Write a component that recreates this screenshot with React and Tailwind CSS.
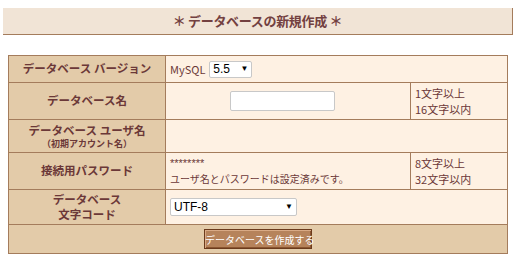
import React from 'react';

const font = { fontFamily: '"Noto Sans CJK JP", "Noto Sans", sans-serif' };
const sans = { fontFamily: '"Liberation Sans", sans-serif' };

export default function App() {
    return (
        <div className="w-[520px] h-[261px] bg-white text-[#6b3838]" style={font}>
            <div className="pt-2 pl-[3px]">
                <div className="w-[510px] h-[27px] bg-[#f1e4d6] border-b border-r border-[#a47c5c] flex items-center justify-center">
                    <h1 className="text-[13px] font-bold text-[#734040] tracking-tight">＊ データベースの新規作成 ＊</h1>
                </div>
            </div>

            {/* Form table */}
            <div className="pt-5 pl-2">
                <table className="w-[500px] border-collapse border border-[#a47c5c] text-[11px] table-fixed">
                    <colgroup>
                        <col className="w-[157px]" />
                        <col className="w-[245px]" />
                        <col />
                    </colgroup>
                    <tbody>
                        <tr className="h-[27px]">
                            <th className="bg-[#e3cba9] border border-[#a47c5c] text-[11.5px] font-bold">データベース バージョン</th>
                            <td colSpan="2" className="bg-[#fef1e3] border border-[#a47c5c] px-1">
                                <div className="flex items-center gap-1">
                                    <span>MySQL</span>
                                    <div className="w-[43px] h-[17px] bg-white border border-[#c8c8c8] rounded-[2px] flex items-center justify-between px-[3px] text-black text-[12px]" style={sans}>
                                        <span>5.5</span>
                                        <span className="text-[8px]">▼</span>
                                    </div>
                                </div>
                            </td>
                        </tr>
                        <tr className="h-[37px]">
                            <th className="bg-[#e3cba9] border border-[#a47c5c] text-[11.5px] font-bold">データベース名</th>
                            <td className="bg-[#fef1e3] border border-[#a47c5c]">
                                <div className="pl-[64px]">
                                    <div className="w-[105px] h-[20px] bg-white border border-[#c8c8c8] rounded-[2px]"></div>
                                </div>
                            </td>
                            <td className="bg-[#fef1e3] border border-[#a47c5c] px-1 leading-[16px]">
                                <div>1文字以上</div>
                                <div>16文字以内</div>
                            </td>
                        </tr>
                        <tr className="h-[33px]">
                            <th className="bg-[#e3cba9] border border-[#a47c5c] font-bold">
                                <div className="text-[11.5px] leading-[15px]">データベース ユーザ名</div>
                                <div className="text-[9px] leading-[12px]">（初期アカウント名）</div>
                            </th>
                            <td colSpan="2" className="bg-[#fef1e3] border border-[#a47c5c]"></td>
                        </tr>
                        <tr className="h-[37px]">
                            <th className="bg-[#e3cba9] border border-[#a47c5c] text-[11.5px] font-bold">接続用パスワード</th>
                            <td className="bg-[#fef1e3] border border-[#a47c5c] px-1 text-[10px] leading-[15px]">
                                <div className="text-[11px]" style={sans}>********</div>
                                <div className="whitespace-nowrap">ユーザ名とパスワードは設定済みです。</div>
                            </td>
                            <td className="bg-[#fef1e3] border border-[#a47c5c] px-1 leading-[16px]">
                                <div>8文字以上</div>
                                <div>32文字以内</div>
                            </td>
                        </tr>
                        <tr className="h-[35px]">
                            <th className="bg-[#e3cba9] border border-[#a47c5c] text-[11.5px] font-bold leading-[15px]">
                                <div>データベース</div>
                                <div>文字コード</div>
                            </th>
                            <td colSpan="2" className="bg-[#fef1e3] border border-[#a47c5c] px-1">
                                <div className="w-[127px] h-[18px] bg-white border border-[#c8c8c8] rounded-[2px] flex items-center justify-between px-[3px] text-black text-[12px]" style={sans}>
                                    <span>UTF-8</span>
                                    <span className="text-[8px]">▼</span>
                                </div>
                            </td>
                        </tr>
                        <tr className="h-[29px]">
                            <td colSpan="3" className="bg-[#e3cba9] border border-[#a47c5c]">
                                <div className="flex justify-center">
                                    <button className="h-[20px] w-[108px] px-0 whitespace-nowrap bg-[#b6835b] text-white text-[10px] border border-[#6b3a1c] shadow-[inset_1px_1px_0_#d9aa85,inset_-1px_-1px_0_#8a5530]">
                                        データベースを作成する
                                    </button>
                                </div>
                            </td>
                        </tr>
                    </tbody>
                </table>
            </div>
        </div>
    );
}
